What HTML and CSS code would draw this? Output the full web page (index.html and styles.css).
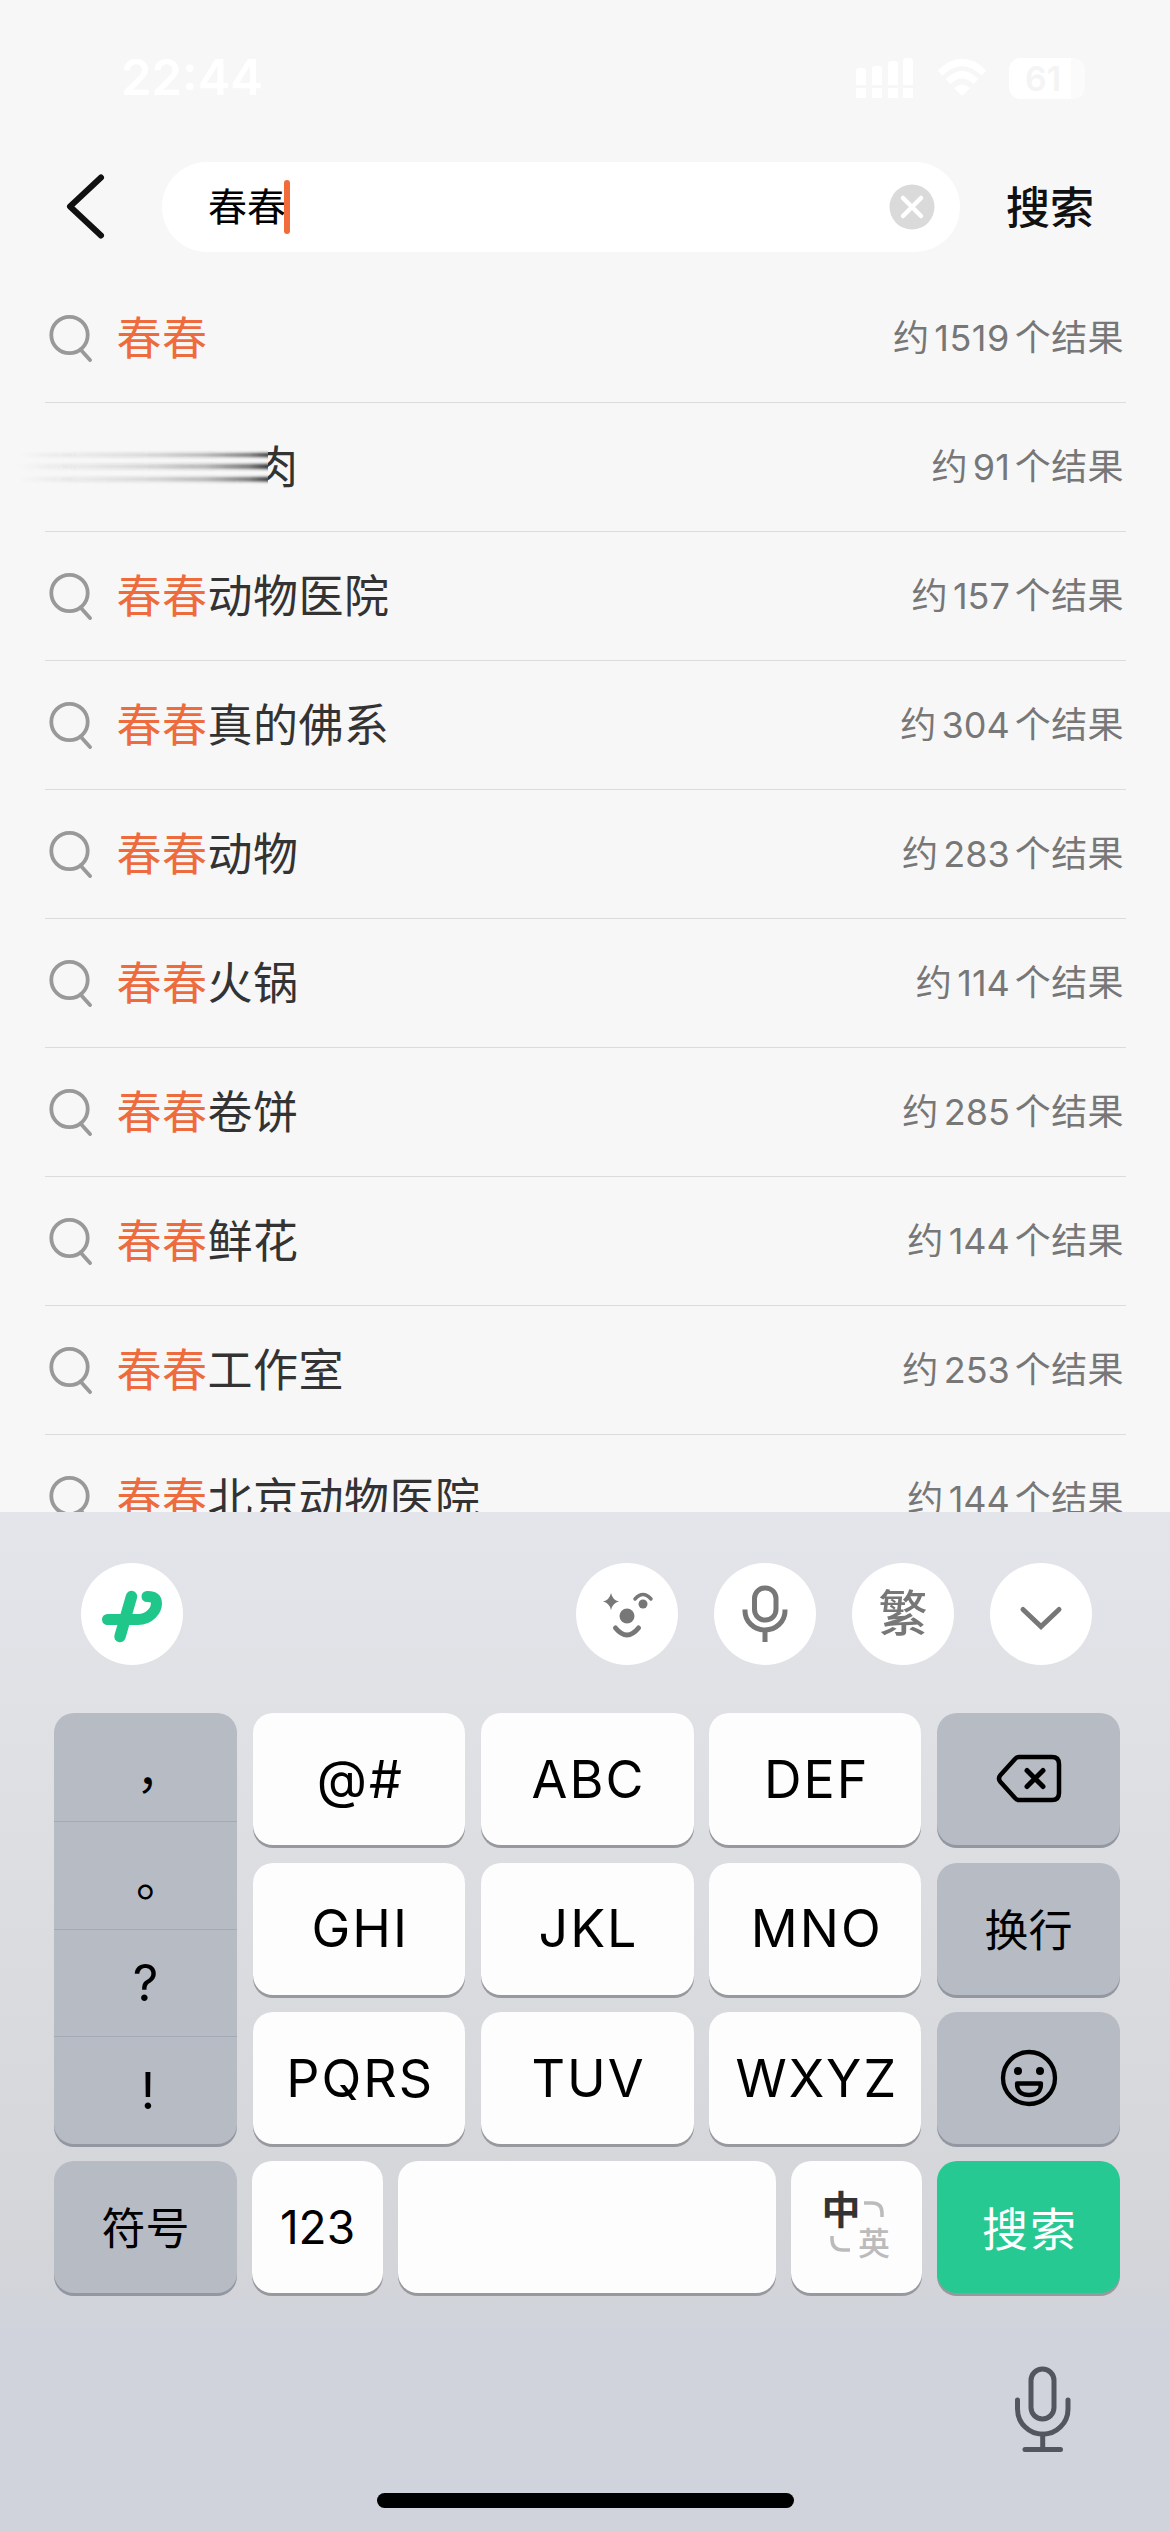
FILE: index.html
```html
<!DOCTYPE html>
<html lang="zh-CN">
<head>
<meta charset="utf-8">
<title>搜索</title>
<link rel="stylesheet" href="styles.css">
</head>
<body>
<svg width="0" height="0" class="defs">
  <symbol id="search" viewBox="0 0 46 48"><circle cx="21.500" cy="21" r="18.200"/><path d="M32.500 35.500 42 46"/></symbol>
</svg>
<div class="screen">
  <header class="status">
    <span class="time">22:44</span>
    <div class="indicators">
      <svg width="60" height="44" viewBox="0 0 60 44" fill="#fff"><path d="M1 15q0-3 3-3h4q3 0 3 3v14H1zM17 13q0-3 3-3h4q3 0 3 3v16H17zM33 8q0-3 3-3h4q3 0 3 3v21H33zM48 5q0-3 3-3h4q3 0 3 3v24H48zM1 32h10v10H1zM17 32h10v10H17zM33 32h10v10H33zM48 32h10v10H48z"/></svg>
      <svg width="50" height="40" viewBox="0 0 50 40" fill="none" stroke="#fff" stroke-width="7"><path d="M3 15Q25-6 47 15M11 23.500Q25 10 39 23.500"/><path d="M25 38 17 30Q25 23 33 30Z" fill="#fff" stroke="none"/></svg>
      <span class="battery"><span class="level">61</span></span>
    </div>
  </header>

  <div class="searchbar">
    <svg class="back" width="42" height="68" viewBox="0 0 42 68"><path d="M36 5.500 5 34.500 36 63.500"/></svg>
    <div class="field">
      <span class="query">春春</span><span class="caret"></span>
      <svg class="clear" width="46" height="46" viewBox="0 0 46 46"><circle cx="23" cy="23" r="22.500" fill="#dadada"/><path d="M14 14 32 32M32 14 14 32" stroke="#fff" stroke-width="4.500" stroke-linecap="round"/></svg>
    </div>
    <span class="submit">搜索</span>
  </div>

  <main class="results">
    <div class="row"><svg class="glass"><use href="#search"/></svg><span class="term"><em>春春</em></span><span class="count">约<b class="long">1519</b>个结果</span></div>
    <div class="row">
      <svg class="smear" width="250" height="50" viewBox="0 0 250 50">
        <defs>
          <linearGradient id="fade"><stop offset="0" stop-color="#333" stop-opacity="0"/><stop offset=".5" stop-color="#333" stop-opacity=".16"/><stop offset=".75" stop-color="#333" stop-opacity=".34"/><stop offset=".92" stop-color="#333" stop-opacity=".65"/><stop offset="1" stop-color="#333"/></linearGradient>
          <filter id="soft" x="0" y="-1" width="1" height="3"><feGaussianBlur stdDeviation="0 1.500"/></filter>
        </defs>
        <g fill="url(#fade)"><rect y="11" width="250" height="4" filter="url(#soft)"/><rect y="22" width="250" height="5" filter="url(#soft)"/><rect y="35" width="250" height="4.500" filter="url(#soft)"/></g>
      </svg>
      <span class="term cut">肉</span><span class="count">约<b>91</b>个结果</span>
    </div>
    <div class="row"><svg class="glass"><use href="#search"/></svg><span class="term"><em>春春</em>动物医院</span><span class="count">约<b>157</b>个结果</span></div>
    <div class="row"><svg class="glass"><use href="#search"/></svg><span class="term"><em>春春</em>真的佛系</span><span class="count">约<b>304</b>个结果</span></div>
    <div class="row"><svg class="glass"><use href="#search"/></svg><span class="term"><em>春春</em>动物</span><span class="count">约<b>283</b>个结果</span></div>
    <div class="row"><svg class="glass"><use href="#search"/></svg><span class="term"><em>春春</em>火锅</span><span class="count">约<b>114</b>个结果</span></div>
    <div class="row"><svg class="glass"><use href="#search"/></svg><span class="term"><em>春春</em>卷饼</span><span class="count">约<b>285</b>个结果</span></div>
    <div class="row"><svg class="glass"><use href="#search"/></svg><span class="term"><em>春春</em>鲜花</span><span class="count">约<b>144</b>个结果</span></div>
    <div class="row"><svg class="glass"><use href="#search"/></svg><span class="term"><em>春春</em>工作室</span><span class="count">约<b>253</b>个结果</span></div>
    <div class="row"><svg class="glass"><use href="#search"/></svg><span class="term"><em>春春</em>北京动物医院</span><span class="count">约<b>144</b>个结果</span></div>
  </main>

  <section class="keyboard">
    <div class="tools">
      <span class="tool brand"><svg width="102" height="102" viewBox="0 0 102 102" fill="none" stroke="#1fc78a" stroke-width="10" stroke-linejoin="round"><path d="M50.500 33.500 39 73.500" stroke-width="11.500" stroke-linecap="round"/><path d="M26.500 56.500H57C69 56.500 75.500 47 75.500 40.500C75.500 35.500 72.500 33.500 67 33.500H66" stroke-linecap="round" stroke-width="11"/></svg></span>
      <span class="tool"><svg width="102" height="102" viewBox="0 0 102 102" fill="#777"><path d="M35 30Q36.500 37 43 38.500Q36.500 40 35 47Q33.500 40 27 38.500Q33.500 37 35 30Z"/><circle cx="51" cy="53" r="7.500"/><circle cx="67" cy="41" r="4.500"/><path d="M59 36Q67 27 75 36" fill="none" stroke="#777" stroke-width="3.500" stroke-linecap="round"/><path d="M39.500 65Q51 79 62.500 65" fill="none" stroke="#777" stroke-width="5" stroke-linecap="round"/></svg></span>
      <span class="tool"><svg width="102" height="102" viewBox="0 0 102 102" fill="none" stroke="#777" stroke-width="5"><rect x="40.500" y="25" width="21.500" height="32" rx="10.500"/><path d="M31 46.500V48A20 19 0 0 0 71 48V46.500M51 67V79"/></svg></span>
      <span class="tool trad">繁</span>
      <span class="tool"><svg width="102" height="102" viewBox="0 0 102 102" fill="none" stroke="#777" stroke-width="5" stroke-linecap="round"><path d="M33 46.500 51 63.500 69 46.500"/></svg></span>
    </div>

    <div class="keys">
      <div class="punct"><span class="full">，</span><span class="full">。</span><span>?</span><span class="bang">!</span></div>
      <span class="key">@#</span><span class="key">ABC</span><span class="key">DEF</span>
      <span class="key fn"><svg width="66" height="50" viewBox="0 0 66 50" fill="none" stroke="#000" stroke-width="4.500" stroke-linejoin="round" stroke-linecap="round"><path d="M23 3H56Q63 3 63 10V39Q63 46 56 46H23Q20.500 46 19 44L4.500 28Q1.500 24.500 4.500 21L19 5Q20.500 3 23 3Z"/><path d="M31 16.500 47 32.500M47 16.500 31 32.500" stroke-width="5"/></svg></span>
      <span class="key">GHI</span><span class="key">JKL</span><span class="key">MNO</span>
      <span class="key fn han">换行</span>
      <span class="key">PQRS</span><span class="key">TUV</span><span class="key">WXYZ</span>
      <span class="key fn"><svg width="58" height="58" viewBox="0 0 58 58" fill="none" stroke="#000" stroke-width="4.300"><circle cx="29" cy="29" r="26"/><g fill="#000" stroke="none"><circle cx="18" cy="22" r="4"/><circle cx="40" cy="22" r="4"/></g><path d="M17 34.500H41Q41 46 29 46Q17 46 17 34.500Z" stroke-linejoin="round"/></svg></span>
    </div>
    <div class="bottom">
      <span class="key fn han">符号</span>
      <span class="key num">123</span>
      <span class="key"></span>
      <span class="key lang"><span class="zh">中</span><svg width="22" height="18" viewBox="0 0 22 18"><path d="M1 2H9Q19 2 19 12V16"/></svg><svg width="22" height="18" viewBox="0 0 22 18"><path d="M2 1V4Q2 15 13 15H20"/></svg><span class="en">英</span></span>
      <span class="key go">搜索</span>
    </div>

    <div class="dock">
      <svg width="60" height="88" viewBox="0 0 60 88" fill="none" stroke="#53565f" stroke-width="5" stroke-linecap="round"><rect x="17" y="4" width="23" height="50" rx="11.500"/><path d="M3.500 35V44A25 25 0 0 0 54 44V35M28.700 69V84M11 84.500H46.500"/></svg>
    </div>
    <div class="home"></div>
  </section>
</div>
</body>
</html>
```
FILE: styles.css
```css
* { box-sizing: border-box; }
body {
  margin: 0;
  background: #f7f7f7;
  font-family: Inter, "Noto Sans CJK SC", sans-serif;
}
svg { display: block; flex: none; }
.defs { position: absolute; }
.screen {
  width: 1170px;
  height: 2532px;
  display: flex;
  flex-direction: column;
  overflow: hidden;
}

.status {
  height: 156px;
  padding: 0 85px 0 121px;
  display: flex;
  align-items: center;
  justify-content: space-between;
  color: #fff;
}
.time { font-size: 49px; font-weight: 600; line-height: 60px; }
.indicators { display: flex; align-items: center; gap: 22px; }
.battery {
  width: 76px;
  height: 41px;
  border-radius: 12px;
  background: #fbfbfb;
}
.level {
  display: block;
  width: 62px;
  height: 41px;
  padding-left: 16px;
  border-radius: 12px 0 0 12px;
  background: #fff;
  color: #f4f4f4;
  font-size: 34px;
  font-weight: 600;
  line-height: 41px;
}

.searchbar {
  height: 118px;
  padding: 6px 0 0 65px;
  display: flex;
  align-items: flex-start;
}
.back {
  margin-top: 10px;
  fill: none;
  stroke: #111;
  stroke-width: 6;
  stroke-linecap: round;
  stroke-linejoin: round;
}
.field {
  width: 798px;
  height: 90px;
  margin-left: 55px;
  padding: 0 25px 0 46px;
  display: flex;
  align-items: center;
  border-radius: 45px;
  background: #fff;
}
.query { font-size: 39px; line-height: 60px; color: #000; }
.caret {
  width: 6px;
  height: 54px;
  margin-left: -2px;
  border-radius: 3px;
  background: #f26b3a;
}
.clear { margin-left: auto; }
.submit {
  margin-left: 46px;
  font-size: 44px;
  font-weight: 500;
  line-height: 92px;
  color: #111;
}

.results { height: 1238px; padding: 0 44px 0 45px; overflow: hidden; }
.row {
  height: 129px;
  display: flex;
  align-items: center;
  border-bottom: 1.500px solid #dcdcdc;
}
.glass {
  width: 46px;
  height: 48px;
  margin: 0 22.500px 0 3px;
  fill: none;
  stroke: #999;
  stroke-width: 3.800;
  stroke-linecap: round;
}
.term {
  padding-top: 1px;
  font-size: 45px;
  line-height: 66px;
  letter-spacing: .5px;
  color: #333;
}
.term em { font-style: normal; color: #ee6b3e; }
.smear { margin-left: -27px; }
.cut { margin-left: -15px; clip-path: inset(0 0 0 15px); }
.count {
  margin-left: auto;
  padding-right: 2px;
  font-size: 36px;
  line-height: 54px;
  letter-spacing: .4px;
  color: #777;
}
.count b { margin: 0 5px; font-weight: 400; letter-spacing: 0; }
.count .long { letter-spacing: .5px; }

.keyboard {
  height: 1020px;
  padding: 51px 50px 0 54px;
  display: flex;
  flex-direction: column;
  background: linear-gradient(#e4e5eb 0, #dfe1e5 200px, #d4d5d9 740px, #d0d3dc 830px, #d0d2dc 100%);
}
.tools {
  height: 150px;
  padding: 0 28px 0 27px;
  display: flex;
  align-items: flex-start;
  gap: 36px;
}
.tool {
  width: 102px;
  height: 102px;
  border-radius: 50%;
  background: #fff;
}
.brand { margin-right: auto; }
.trad {
  font-size: 49px;
  font-weight: 500;
  line-height: 102px;
  text-align: center;
  color: #777;
}
.keys {
  display: grid;
  grid-template-columns: 183px 212px 213px 212px 183px;
  grid-template-rows: repeat(3, 132px);
  gap: 17.500px 15.750px;
}
.punct {
  grid-row: span 3;
  display: grid;
  grid-template-rows: repeat(4, 1fr);
  border-radius: 20px;
  background: #b6bbc4;
  box-shadow: 0 3px 0 #9297a1;
  font-size: 50px;
  overflow: hidden;
}
.punct span {
  display: flex;
  align-items: center;
  justify-content: center;
}
.punct .full { padding-left: 29px; font-size: 48px; }
.punct .bang { padding-left: 5px; }
.punct span + span { border-top: 1.500px solid #a4a9b6; }
.key {
  display: flex;
  align-items: center;
  justify-content: center;
  border-radius: 20px;
  background: #fdfdfe;
  box-shadow: 0 3px 0 #97999e;
  color: #000;
  font-size: 52px;
  letter-spacing: 2px;
  padding-left: 3px;
}
.key.fn {
  padding-left: 0;
  background: #b6bbc4;
  box-shadow: 0 3px 0 #9297a1;
}
.key.han { padding-bottom: 2px; font-size: 44px; letter-spacing: 0; }
.key.num { padding-left: 0; font-size: 46px; letter-spacing: 0; }
.bottom {
  margin-top: 17px;
  height: 132px;
  display: grid;
  grid-template-columns: 183px 131px 378px 131px 183px;
  gap: 15px;
}
.key.lang {
  padding-left: 0;
  display: grid;
  grid-template-columns: 35px 31px;
  grid-template-rows: 34px 34px;
  align-content: center;
  justify-content: center;
  justify-items: center;
  align-items: center;
  letter-spacing: 0;
  fill: none;
  stroke: #bbb;
  stroke-width: 3.500;
  line-height: 34px;
}
.zh { font-size: 39px; font-weight: 700; color: #333; }
.en { font-size: 32px; font-weight: 500; color: #bbb; }
.key.go {
  padding-bottom: 2px;
  background: #27c992;
  color: #fff;
  font-size: 46px;
  letter-spacing: 2px;
}
.dock {
  margin-top: 72px;
  padding-right: 46px;
  display: flex;
  justify-content: flex-end;
}
.home {
  width: 417px;
  height: 15px;
  margin: 40px 0 0 323px;
  border-radius: 8px;
  background: #000;
}
```
